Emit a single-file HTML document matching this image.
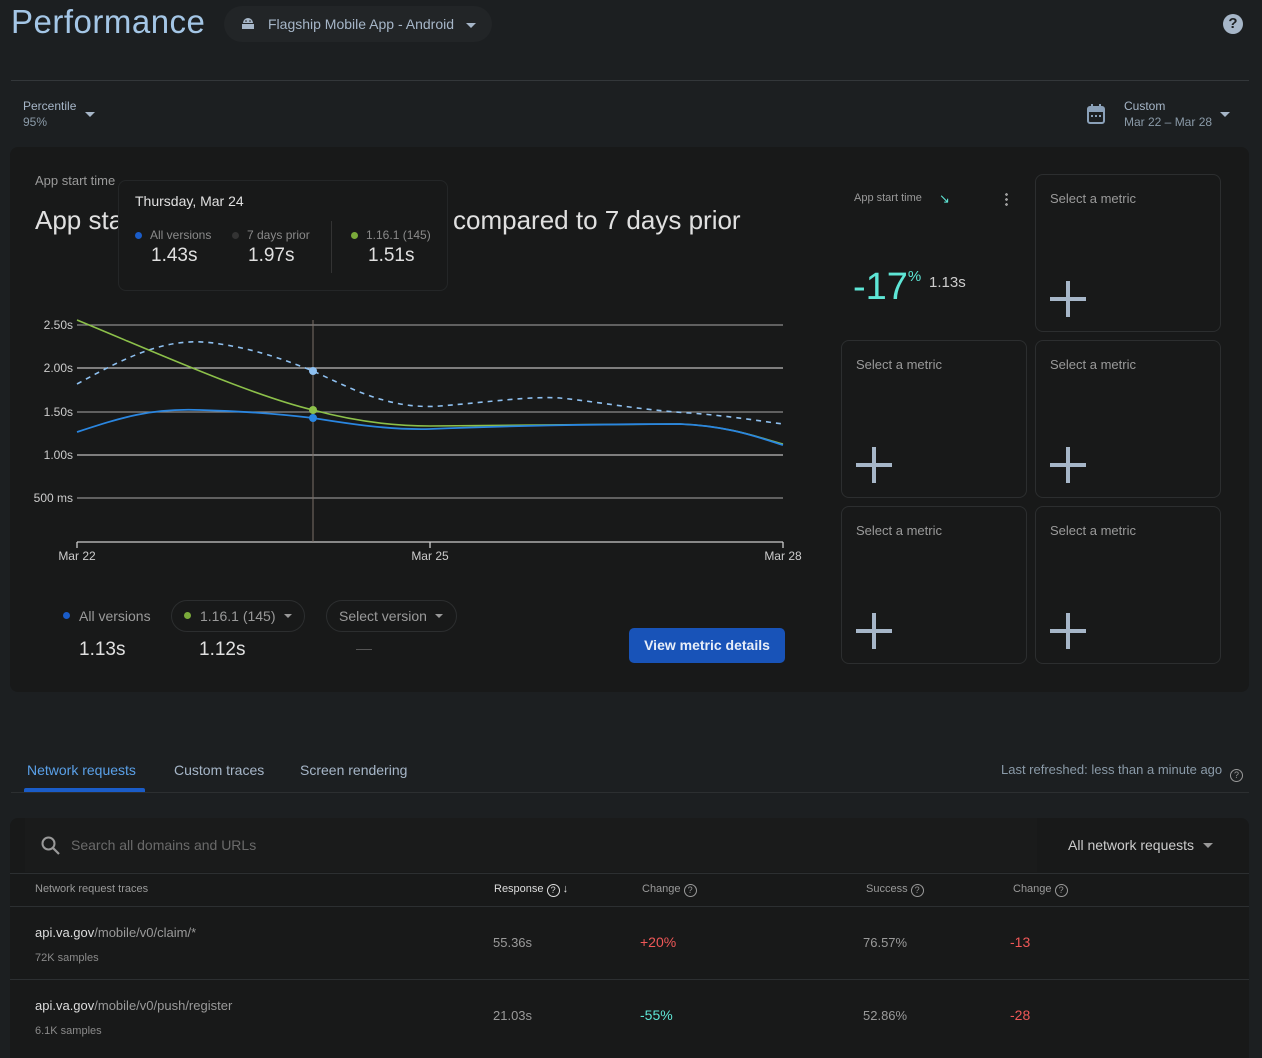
<!DOCTYPE html>
<html><head><meta charset="utf-8"><style>
*{box-sizing:border-box;margin:0;padding:0}
body{width:1262px;height:1052px;background:#1c1f21;font-family:"Liberation Sans",sans-serif;color:#c8c8c8;position:relative;overflow:hidden}
.a{position:absolute;white-space:nowrap}
.card{position:absolute;background:#181919;border-radius:8px}
.tile{position:absolute;border:1px solid #2c2e2f;border-radius:8px;background:#181919}
.tile .t{position:absolute;left:14px;top:16px;font-size:13px;color:#9a9a9a}
.plus{position:absolute;left:14px;top:106px;width:36px;height:36px}
.plus:before{content:"";position:absolute;left:0;top:16px;width:36px;height:4px;background:#a6b6c8}
.plus:after{content:"";position:absolute;left:16px;top:0;width:4px;height:36px;background:#a6b6c8}
.q{display:inline-block;width:13px;height:13px;border:1.3px solid #999;border-radius:50%;font-size:9px;line-height:11px;text-align:center;vertical-align:-1px;color:#999}
</style></head><body>
<div class="a" style="left:11px;top:3px;font-size:33px;letter-spacing:0.5px;color:#a4c6e6">Performance</div>
<div class="a" style="left:224px;top:6px;width:268px;height:36px;border-radius:18px;background:#222527"></div>
<svg class="a" style="left:241px;top:17px" width="14" height="12" viewBox="0 0 14 12"><path d="M2 6a5 5 0 0 1 10 0z M1 7h12v5H1z" fill="#a6b6c8"/><circle cx="5" cy="4" r="0.8" fill="#222"/><circle cx="9" cy="4" r="0.8" fill="#222"/></svg>
<div class="a" style="left:268px;top:16px;font-size:14px;color:#a6b6c8">Flagship Mobile App - Android</div>
<div class="a" style="left:466px;top:23px;border:5px solid transparent;border-top-color:#a6b6c8"></div>
<div class="a" style="left:1223px;top:14px;width:20px;height:20px;border-radius:50%;background:#a6b6c8;color:#1c1f21;font-weight:bold;font-size:15px;text-align:center;line-height:20px">?</div>
<div class="a" style="left:11px;top:80px;width:1238px;height:1px;background:#33373a"></div>
<div class="a" style="left:23px;top:99px;font-size:12px;color:#a6b6c8">Percentile</div>
<div class="a" style="left:23px;top:115px;font-size:12px;color:#8a9aa8">95%</div>
<div class="a" style="left:85px;top:112px;border:5px solid transparent;border-top-color:#a6b6c8"></div>
<svg class="a" style="left:1086px;top:103px" width="20" height="22" viewBox="0 0 20 22"><rect x="2" y="4" width="16" height="16" rx="2" fill="none" stroke="#8aa0b8" stroke-width="2"/><rect x="2" y="4" width="16" height="5" fill="#8aa0b8"/><rect x="5" y="1" width="2" height="4" fill="#8aa0b8"/><rect x="13" y="1" width="2" height="4" fill="#8aa0b8"/><rect x="5" y="12" width="2" height="2" fill="#8aa0b8"/><rect x="9" y="12" width="2" height="2" fill="#8aa0b8"/><rect x="13" y="12" width="2" height="2" fill="#8aa0b8"/></svg>
<div class="a" style="left:1124px;top:99px;font-size:12px;color:#a6b6c8">Custom</div>
<div class="a" style="left:1124px;top:115px;font-size:12px;color:#8a9aa8">Mar 22 – Mar 28</div>
<div class="a" style="left:1220px;top:112px;border:5px solid transparent;border-top-color:#a6b6c8"></div>

<div class="card" style="left:10px;top:147px;width:1239px;height:545px"></div>
<div class="a" style="left:35px;top:173px;font-size:13px;color:#9a9a9a">App start time</div>
<div class="a" style="left:35px;top:205px;font-size:26px;color:#e0e0e0">App start time</div>
<div class="a" style="left:453px;top:205px;font-size:26px;color:#e0e0e0">compared to 7 days prior</div>
<div class="a" style="left:118px;top:180px;width:330px;height:111px;background:#181919;border:1px solid #242627;border-radius:8px">
 <div class="a" style="left:16px;top:12px;font-size:14px;color:#e0e0e0">Thursday, Mar 24</div>
 <div class="a" style="left:16px;top:47px;font-size:12px;color:#8a8a8a"><span style="display:inline-block;width:7px;height:7px;border-radius:50%;background:#1a5cc8;margin-right:8px"></span>All versions</div>
 <div class="a" style="left:113px;top:47px;font-size:12px;color:#8a8a8a"><span style="display:inline-block;width:7px;height:7px;border-radius:50%;background:#333;margin-right:8px"></span>7 days prior</div>
 <div class="a" style="left:232px;top:47px;font-size:12px;color:#8a8a8a"><span style="display:inline-block;width:7px;height:7px;border-radius:50%;background:#7aaa3a;margin-right:8px"></span>1.16.1 (145)</div>
 <div class="a" style="left:32px;top:64px;font-size:19px;color:#e0e0e0">1.43s</div>
 <div class="a" style="left:129px;top:64px;font-size:19px;color:#e0e0e0">1.97s</div>
 <div class="a" style="left:249px;top:64px;font-size:19px;color:#e0e0e0">1.51s</div>
 <div class="a" style="left:212px;top:40px;width:1px;height:52px;background:#333"></div>
</div>

<svg class="a" style="left:0;top:300px" width="820" height="270" viewBox="0 300 820 270" font-family="Liberation Sans" font-size="12" fill="#ccc">
<g stroke="#8a8a8a" stroke-width="1.3"><line x1="77" y1="325" x2="783" y2="325"/><line x1="77" y1="368" x2="783" y2="368" stroke="#bbb"/><line x1="77" y1="412" x2="783" y2="412"/><line x1="77" y1="455" x2="783" y2="455" stroke="#bbb"/><line x1="77" y1="498" x2="783" y2="498"/><line x1="77" y1="542" x2="783" y2="542" stroke="#ccc"/><line x1="77" y1="542" x2="77" y2="548" stroke="#ccc"/><line x1="430" y1="542" x2="430" y2="548" stroke="#ccc"/><line x1="783" y1="542" x2="783" y2="548" stroke="#ccc"/></g>
<line x1="313" y1="320" x2="313" y2="542" stroke="#7a6e66" stroke-width="1"/>
<g text-anchor="end"><text x="73" y="329">2.50s</text><text x="73" y="372">2.00s</text><text x="73" y="416">1.50s</text><text x="73" y="459">1.00s</text><text x="73" y="502">500 ms</text></g>
<g text-anchor="middle"><text x="77" y="560">Mar 22</text><text x="430" y="560">Mar 25</text><text x="783" y="560">Mar 28</text></g>
<path d="M77 384 C130 355,170 335,220 344 C260 350,290 362,313 371 C350 388,390 410,440 406 C490 402,530 396,560 398 C600 402,640 410,690 413 C730 416,760 421,783 424" fill="none" stroke="#8ec0f0" stroke-width="1.6" stroke-dasharray="5,5"/>
<path d="M77 320 C150 350,250 395,313 410 C350 420,390 426,430 426 C500 426,600 424,680 424 C730 426,760 438,783 444" fill="none" stroke="#8cc04a" stroke-width="1.6"/>
<path d="M77 432 C120 418,150 408,200 410 C240 411,280 414,313 418 C350 424,390 430,430 429 C500 426,600 424,680 424 C730 426,760 438,783 445" fill="none" stroke="#2a86e0" stroke-width="1.8"/>
<circle cx="313" cy="371" r="4" fill="#8ec0f0"/><circle cx="313" cy="410" r="4" fill="#8cc04a"/><circle cx="313" cy="418" r="4" fill="#2a86e0"/>
</svg>

<div class="a" style="left:63px;top:608px;font-size:14px;color:#9a9a9a"><span style="display:inline-block;width:7px;height:7px;border-radius:50%;background:#1a5cc8;margin-right:9px;vertical-align:2px"></span>All versions</div>
<div class="a" style="left:171px;top:600px;width:134px;height:32px;border:1px solid #2c2e2f;border-radius:16px"></div>
<div class="a" style="left:184px;top:608px;font-size:14px;color:#9a9a9a"><span style="display:inline-block;width:7px;height:7px;border-radius:50%;background:#7aaa3a;margin-right:9px;vertical-align:2px"></span>1.16.1 (145)</div>
<div class="a" style="left:284px;top:614px;border:4px solid transparent;border-top-color:#999"></div>
<div class="a" style="left:326px;top:600px;width:131px;height:32px;border:1px solid #2c2e2f;border-radius:16px"></div>
<div class="a" style="left:339px;top:608px;font-size:14px;color:#9a9a9a">Select version</div>
<div class="a" style="left:435px;top:614px;border:4px solid transparent;border-top-color:#999"></div>
<div class="a" style="left:79px;top:639px;font-size:19px;color:#e0e0e0">1.13s</div>
<div class="a" style="left:199px;top:639px;font-size:19px;color:#e0e0e0">1.12s</div>
<div class="a" style="left:356px;top:649px;width:16px;height:1px;background:#555"></div>
<div class="a" style="left:629px;top:628px;width:156px;height:35px;border-radius:5px;background:#1853b8;color:#e8eef8;font-size:14px;font-weight:bold;text-align:center;line-height:35px">View metric details</div>

<div class="a" style="left:854px;top:192px;font-size:11px;color:#9a9a9a">App start time</div>
<div class="a" style="left:939px;top:191px;font-size:13px;color:#5ee6d6">↘</div>
<div class="a" style="left:1005px;top:192px;width:3px;height:14px;background:radial-gradient(circle,#999 1.3px,transparent 1.5px) 0 0/3px 5px"></div>
<div class="a" style="left:853px;top:266px;font-size:38px;color:#5ee6d6">-17<span style="font-size:15px;vertical-align:18px">%</span></div>
<div class="a" style="left:929px;top:274px;font-size:15px;color:#ccc">1.13s</div>
<div class="tile" style="left:1035px;top:174px;width:186px;height:158px"><div class="t">Select a metric</div><div class="plus"></div></div>
<div class="tile" style="left:841px;top:340px;width:186px;height:158px"><div class="t">Select a metric</div><div class="plus"></div></div>
<div class="tile" style="left:1035px;top:340px;width:186px;height:158px"><div class="t">Select a metric</div><div class="plus"></div></div>
<div class="tile" style="left:841px;top:506px;width:186px;height:158px"><div class="t">Select a metric</div><div class="plus"></div></div>
<div class="tile" style="left:1035px;top:506px;width:186px;height:158px"><div class="t">Select a metric</div><div class="plus"></div></div>

<div class="a" style="left:27px;top:762px;font-size:14px;color:#5aa0e8">Network requests</div>
<div class="a" style="left:24px;top:788px;width:121px;height:4px;background:#1a5cc8;border-radius:2px 2px 0 0"></div>
<div class="a" style="left:174px;top:762px;font-size:14px;color:#a6b6c8">Custom traces</div>
<div class="a" style="left:300px;top:762px;font-size:14px;color:#a6b6c8">Screen rendering</div>
<div class="a" style="left:1001px;top:762px;font-size:13px;color:#8a9aa8">Last refreshed: less than a minute ago</div>
<div class="a" style="left:1230px;top:764px"><span class="q">?</span></div>
<div class="a" style="left:11px;top:792px;width:1238px;height:1px;background:#2c2f31"></div>

<div class="card" style="left:10px;top:818px;width:1239px;height:240px;border-radius:8px 8px 0 0"></div>
<div class="a" style="left:25px;top:818px;width:1012px;height:54px;background:#1a1b1b"></div>
<svg class="a" style="left:40px;top:835px" width="22" height="22" viewBox="0 0 22 22"><circle cx="8.5" cy="8.5" r="6" fill="none" stroke="#999" stroke-width="2"/><line x1="13" y1="13" x2="19" y2="19" stroke="#999" stroke-width="2.2"/></svg>
<div class="a" style="left:71px;top:837px;font-size:14px;color:#6a6a6a">Search all domains and URLs</div>
<div class="a" style="left:1068px;top:837px;font-size:14px;color:#ccc">All network requests</div>
<div class="a" style="left:1203px;top:843px;border:5px solid transparent;border-top-color:#999"></div>
<div class="a" style="left:10px;top:873px;width:1239px;height:1px;background:#2c2f31"></div>
<div class="a" style="left:35px;top:883px;font-size:11px;color:#9a9a9a">Network request traces</div>
<div class="a" style="left:494px;top:883px;font-size:11px;color:#ddd">Response <span class="q" style="color:#ddd;border-color:#ddd">?</span> <b>↓</b></div>
<div class="a" style="left:642px;top:883px;font-size:11px;color:#9a9a9a">Change <span class="q">?</span></div>
<div class="a" style="left:866px;top:883px;font-size:11px;color:#9a9a9a">Success <span class="q">?</span></div>
<div class="a" style="left:1013px;top:883px;font-size:11px;color:#9a9a9a">Change <span class="q">?</span></div>
<div class="a" style="left:10px;top:906px;width:1239px;height:1px;background:#2c2f31"></div>

<div class="a" style="left:35px;top:925px;font-size:13px;color:#ddd">api.va.gov<span style="color:#9a9a9a">/mobile/v0/claim/*</span></div>
<div class="a" style="left:35px;top:952px;font-size:11px;color:#8a8a8a">72K samples</div>
<div class="a" style="left:493px;top:935px;font-size:13px;color:#9a9a9a">55.36s</div>
<div class="a" style="left:640px;top:934px;font-size:14px;color:#f05858">+20%</div>
<div class="a" style="left:863px;top:935px;font-size:13px;color:#9a9a9a">76.57%</div>
<div class="a" style="left:1010px;top:934px;font-size:14px;color:#f05858">-13</div>
<div class="a" style="left:10px;top:979px;width:1239px;height:1px;background:#2c2f31"></div>
<div class="a" style="left:35px;top:998px;font-size:13px;color:#ddd">api.va.gov<span style="color:#9a9a9a">/mobile/v0/push/register</span></div>
<div class="a" style="left:35px;top:1025px;font-size:11px;color:#8a8a8a">6.1K samples</div>
<div class="a" style="left:493px;top:1008px;font-size:13px;color:#9a9a9a">21.03s</div>
<div class="a" style="left:640px;top:1007px;font-size:14px;color:#5ee6d6">-55%</div>
<div class="a" style="left:863px;top:1008px;font-size:13px;color:#9a9a9a">52.86%</div>
<div class="a" style="left:1010px;top:1007px;font-size:14px;color:#f05858">-28</div>
</body></html>
